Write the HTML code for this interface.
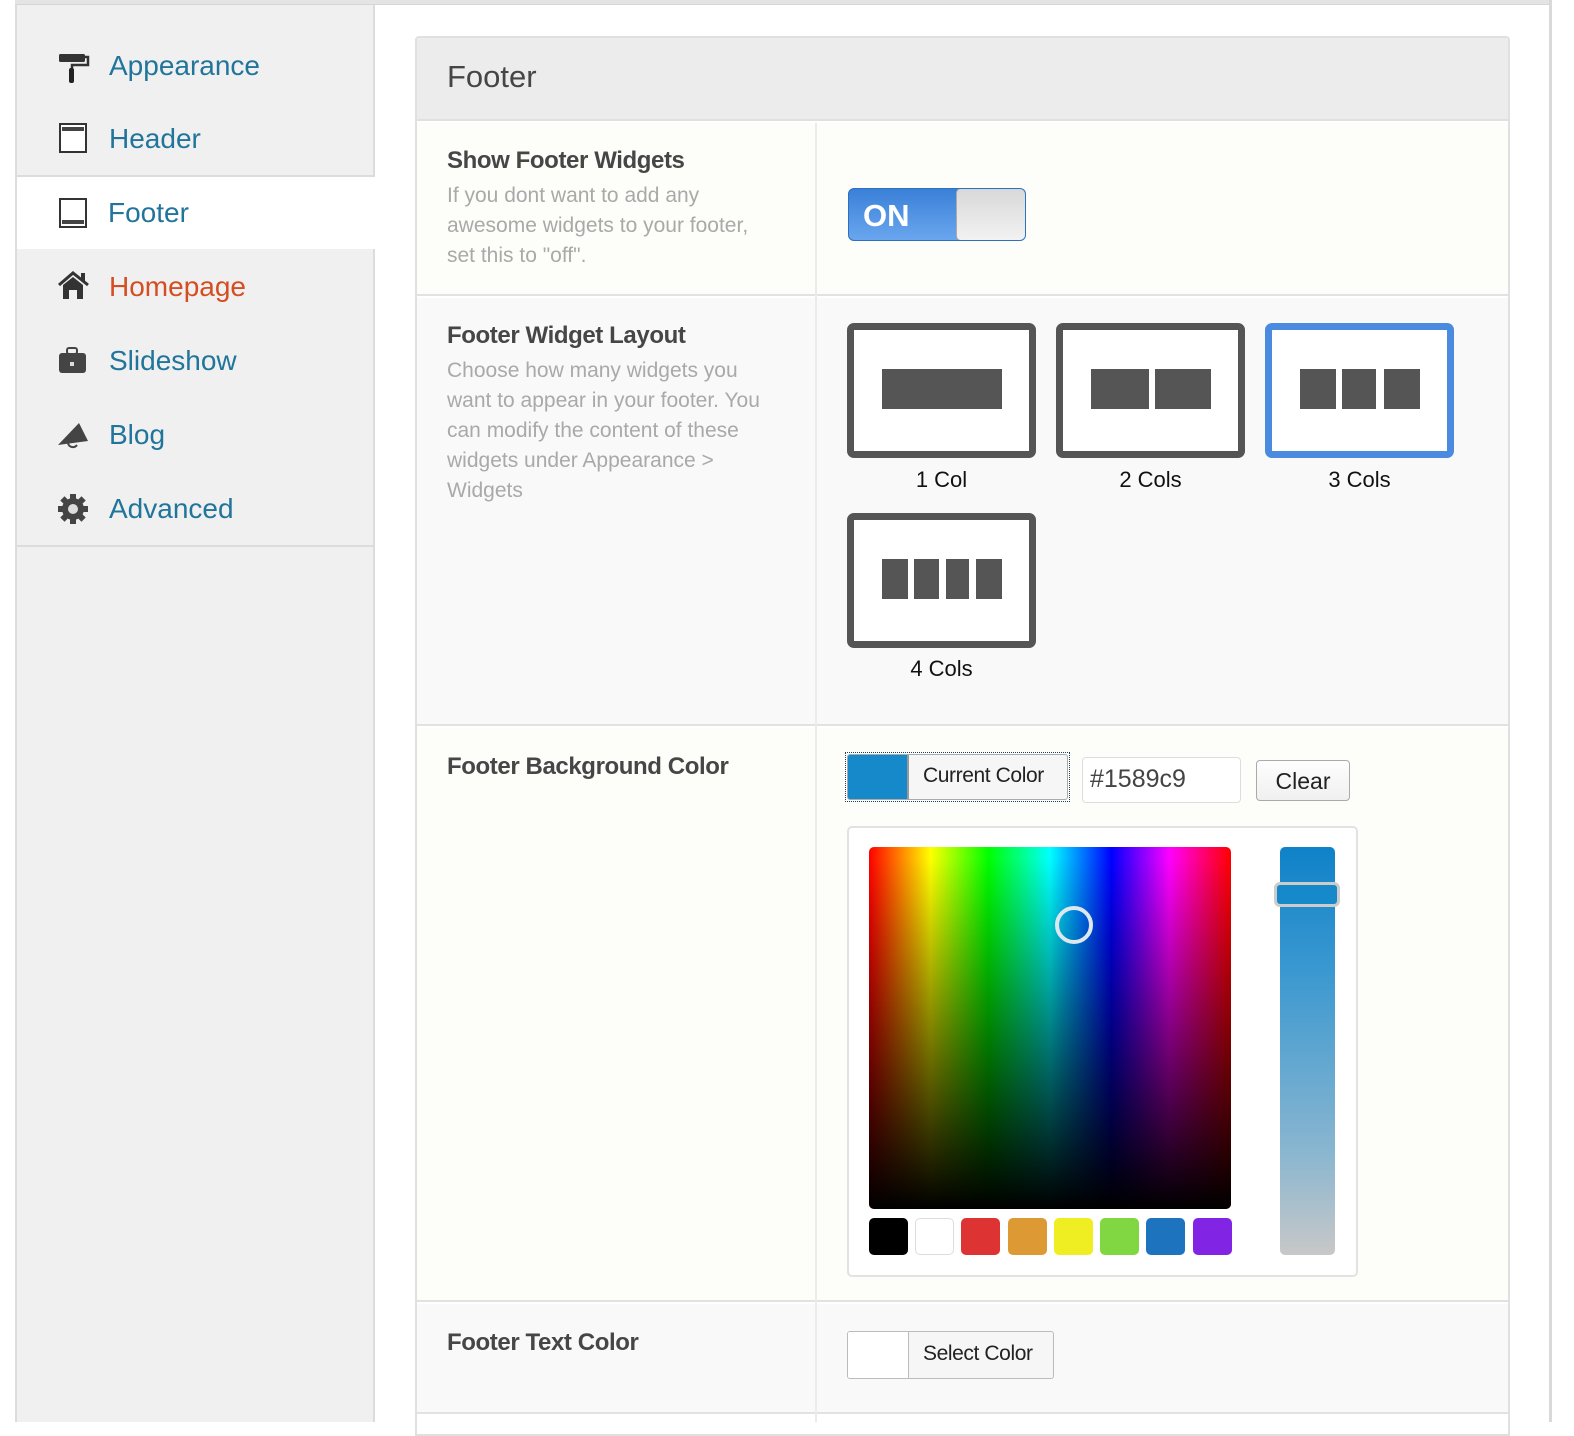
<!DOCTYPE html>
<html><head><meta charset="utf-8"><style>
*{margin:0;padding:0;box-sizing:border-box}
body{width:1574px;height:1422px;background:#fff;font-family:"Liberation Sans",Arial,sans-serif;position:relative;overflow:hidden}
.a{position:absolute}
.nav{position:absolute;left:15px;width:360px;background:#f0f0f0;border-bottom:2px solid #dcdcdc;border-left:2px solid #dcdcdc;border-right:2px solid #dcdcdc}
.nav span{position:absolute;left:92px;font-size:28px;color:#21759b}
.nav svg{position:absolute;left:40px}
.t{position:absolute;left:447px;font-weight:bold;font-size:24px;color:#464646;letter-spacing:-0.4px}
.d{position:absolute;left:447px;font-size:21px;color:#a9a9a9;line-height:30px;width:322px}
.box{position:absolute;width:189px;height:135px;border:7px solid #555;border-radius:7px;background:#fff}
.box i{position:absolute;top:39px;height:40px;background:#555}
.lbl{position:absolute;font-size:22px;color:#111;width:189px;text-align:center}
.sw{position:absolute;top:1218px;width:39px;height:37px;border-radius:5px}
</style></head><body>
<div class="a" style="left:15px;top:0;width:1537px;height:5px;background:#e4e4e4;border-bottom:1px solid #d6d6d6"></div>
<div class="a" style="left:1549px;top:0;width:3px;height:1422px;background:#d9d9d9"></div>
<div class="a" style="left:15px;top:5px;width:360px;height:1417px;background:#f0f0f0;border-left:2px solid #dcdcdc;border-right:2px solid #dcdcdc"></div>

<div class="nav" style="top:5px;height:98px"><svg style="top:46px" width="34" height="34" viewBox="0 0 34 34"><rect x="2" y="3" width="26" height="8" rx="1.5" fill="#333"/><path d="M28 6h3v8H15v4" fill="none" stroke="#333" stroke-width="2.5"/><rect x="12" y="17" width="5" height="15" rx="2" fill="#222"/></svg><span style="top:45px">Appearance</span></div>
<div class="nav" style="top:101px;height:76px"><svg style="top:21px" width="30" height="32"><rect x="3" y="2" width="26" height="28" fill="#fff" stroke="#333" stroke-width="2"/><rect x="5" y="5" width="22" height="4" fill="#444"/></svg><span style="top:22px">Header</span></div>
<div class="a" style="left:17px;top:177px;width:358px;height:73px;background:#fff"><svg style="position:absolute;left:40px;top:20px" width="30" height="32"><rect x="3" y="2" width="26" height="28" fill="#fff" stroke="#333" stroke-width="2"/><rect x="5" y="23" width="22" height="4" fill="#444"/></svg><span style="position:absolute;left:91px;top:20px;font-size:28px;color:#21759b">Footer</span></div>
<div class="nav" style="top:249px;height:76px"><svg style="top:22px" width="34" height="30" viewBox="0 0 34 30"><path d="M2 14L16 2l15 12" fill="none" stroke="#333" stroke-width="3"/><path d="M6 14L16 6l10 8v14H20v-9h-8v9H6z" fill="#333"/><rect x="24" y="2" width="4" height="8" fill="#333"/></svg><span style="top:22px;color:#d54e21">Homepage</span></div>
<div class="nav" style="top:323px;height:76px"><svg style="top:24px" width="30" height="28"><rect x="10" y="1" width="10" height="6" rx="2" fill="none" stroke="#444" stroke-width="2"/><rect x="2" y="6" width="27" height="20" rx="3" fill="#444"/><rect x="13" y="15" width="4" height="4" fill="#ddd"/></svg><span style="top:22px">Slideshow</span></div>
<div class="nav" style="top:397px;height:76px"><svg style="top:22px" width="34" height="30"><path d="M1 26L22 4l9 18z" fill="#444"/><path d="M11 24a5 5 0 0 0 9 2" fill="none" stroke="#444" stroke-width="2"/></svg><span style="top:22px">Blog</span></div>
<div class="nav" style="top:471px;height:76px"><svg style="top:22px" width="32" height="32" viewBox="0 0 32 32"><g fill="#444" transform="translate(16 16)"><circle r="11"/><rect x="-3" y="-15" width="6" height="30"/><rect x="-15" y="-3" width="30" height="6"/><rect x="-3" y="-15" width="6" height="30" transform="rotate(45)"/><rect x="-3" y="-15" width="6" height="30" transform="rotate(-45)"/></g><circle cx="16" cy="16" r="5" fill="#ddd"/></svg><span style="top:22px">Advanced</span></div>

<div class="a" style="left:415px;top:36px;width:1095px;height:1400px;border:2px solid #e0e0e0;border-radius:4px 4px 0 0;background:#fff"></div>
<div class="a" style="left:417px;top:38px;width:1091px;height:83px;background:#ececec;border-bottom:2px solid #e0e0e0"></div>
<div class="a" style="left:447px;top:59px;font-size:31px;color:#464646">Footer</div>
<div class="a" style="left:417px;top:123px;width:1091px;height:173px;background:#fdfdf9;border-bottom:2px solid #e2e2e2"></div>
<div class="a" style="left:417px;top:298px;width:1091px;height:428px;background:#f9f9f9;border-bottom:2px solid #e2e2e2"></div>
<div class="a" style="left:417px;top:728px;width:1091px;height:574px;background:#fdfdf9;border-bottom:2px solid #e2e2e2"></div>
<div class="a" style="left:417px;top:1304px;width:1091px;height:110px;background:#f9f9f9;border-bottom:2px solid #e2e2e2"></div>
<div class="a" style="left:815px;top:123px;width:2px;height:1299px;background:#ebebeb"></div>

<div class="t" style="top:147px">Show Footer Widgets</div>
<div class="d" style="top:181px">If you dont want to add any awesome widgets to your footer, set this to "off".</div>
<div class="a" style="left:848px;top:188px;width:178px;height:53px;border-radius:6px;background:linear-gradient(#3a80d8,#6aa6ee);border:1px solid #2f6fc0;overflow:hidden">
<span style="position:absolute;left:14px;top:9px;font-weight:bold;font-size:31px;color:#fff">ON</span>
<div style="position:absolute;left:107px;top:-1px;width:70px;height:53px;border:1px solid #aaa;border-radius:5px;background:linear-gradient(#d8d8d8,#f2f2f2)"></div></div>

<div class="t" style="top:322px">Footer Widget Layout</div>
<div class="d" style="top:356px;width:335px">Choose how many widgets you want to appear in your footer. You can modify the content of these widgets under Appearance &gt; Widgets</div>

<div class="box" style="left:847px;top:323px"><i style="left:28px;width:120px"></i></div>
<div class="box" style="left:1056px;top:323px"><i style="left:28px;width:58px"></i><i style="left:92px;width:56px"></i></div>
<div class="box" style="left:1265px;top:323px;border-color:#4a8be0"><i style="left:28px;width:36px"></i><i style="left:70px;width:34px"></i><i style="left:112px;width:36px"></i></div>
<div class="box" style="left:847px;top:513px"><i style="left:28px;width:26px"></i><i style="left:60px;width:25px"></i><i style="left:92px;width:23px"></i><i style="left:122px;width:26px"></i></div>
<div class="lbl" style="left:847px;top:467px">1 Col</div>
<div class="lbl" style="left:1056px;top:467px">2 Cols</div>
<div class="lbl" style="left:1265px;top:467px">3 Cols</div>
<div class="lbl" style="left:847px;top:656px">4 Cols</div>

<div class="t" style="top:753px">Footer Background Color</div>
<div class="a" style="left:845px;top:752px;width:225px;height:50px;border:1px dotted #1e4060"></div>
<div class="a" style="left:847px;top:754px;width:221px;height:46px;border:1px solid #aaa;border-radius:3px;background:#f6f6f6;overflow:hidden"><div style="position:absolute;left:0;top:0;width:61px;height:46px;background:#1589c9;border-right:2px solid #999"></div><span style="position:absolute;left:75px;top:9px;font-size:21px;color:#222;letter-spacing:-0.4px">Current Color</span></div>
<div class="a" style="left:1082px;top:757px;width:159px;height:46px;border:1px solid #ddd;border-radius:4px;background:#fff;font-size:25px;color:#444;padding:7px 7px">#1589c9</div>
<div class="a" style="left:1256px;top:760px;width:94px;height:41px;border:1px solid #aaa;border-radius:4px;background:linear-gradient(#fefefe,#f0f0f0);font-size:23px;color:#222;text-align:center;line-height:40px">Clear</div>

<div class="a" style="left:847px;top:826px;width:511px;height:451px;border:2px solid #e2e2e2;border-radius:5px;background:#fff"></div>
<div class="a" style="left:869px;top:847px;width:362px;height:362px;border-radius:5px;overflow:hidden;background:linear-gradient(90deg,#f00,#ff0 17%,#0f0 33%,#0ff 50%,#00f 67%,#f0f 83%,#f00)">
<div style="position:absolute;inset:0;background:linear-gradient(rgba(0,0,0,0) 3%,#000 100%)"></div></div>
<div class="a" style="left:1055px;top:906px;width:38px;height:38px;border-radius:50%;border:4px solid #dde8ee"></div>
<div class="a" style="left:1280px;top:847px;width:55px;height:408px;border-radius:5px;background:linear-gradient(#0f82c8,#3a98d0 30%,#8ab6d0 75%,#c8c8c8)"></div>
<div class="a" style="left:1274px;top:882px;width:66px;height:25px;border:3px solid #ccc;border-radius:6px;background:#1589c9"></div>
<div class="sw" style="left:869px;background:#000"></div>
<div class="sw" style="left:915px;background:#fff;border:1px solid #ddd"></div>
<div class="sw" style="left:961px;background:#dd3333"></div>
<div class="sw" style="left:1008px;background:#dd9933"></div>
<div class="sw" style="left:1054px;background:#eeee22"></div>
<div class="sw" style="left:1100px;background:#81d742"></div>
<div class="sw" style="left:1146px;background:#1e73be"></div>
<div class="sw" style="left:1193px;background:#8224e3"></div>

<div class="t" style="top:1329px">Footer Text Color</div>
<div class="a" style="left:847px;top:1331px;width:207px;height:48px;border:1px solid #bbb;border-radius:3px;background:#f6f6f6;overflow:hidden"><div style="position:absolute;left:0;top:0;width:61px;height:48px;background:#fff;border-right:1px solid #bbb"></div><span style="position:absolute;left:75px;top:10px;font-size:21px;color:#222;letter-spacing:-0.4px">Select Color</span></div>
</body></html>
